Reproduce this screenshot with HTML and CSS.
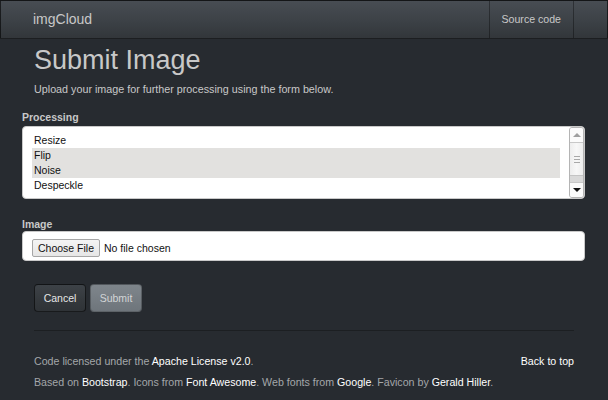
FILE: index.html
```html
<!DOCTYPE html>
<html lang="en">
<head>
<meta charset="utf-8">
<title>imgCloud - Submit Image</title>
<link rel="stylesheet" href="styles.css">
</head>
<body>
<header class="navbar">
  <div class="nav-inner">
    <a class="brand" href="#">imgCloud</a>
    <nav class="nav-links"><a class="nav-link" href="#">Source code</a></nav>
  </div>
</header>
<main class="container">
  <h1 class="title">Submit Image</h1>
  <p class="lead">Upload your image for further processing using the form below.</p>
  <form class="form">
    <div class="group">
      <label class="label">Processing</label>
      <div class="listbox">
        <div class="options">
          <div class="option">Resize</div>
          <div class="option sel">Flip</div>
          <div class="option sel">Noise</div>
          <div class="option">Despeckle</div>
        </div>
        <div class="scrollbar">
          <div class="sb-btn sb-up"><span class="tri-up"></span></div>
          <div class="sb-thumb"><span class="grip"></span><span class="grip"></span><span class="grip"></span></div>
          <div class="sb-track"></div>
          <div class="sb-btn sb-down"><span class="tri-down"></span></div>
        </div>
      </div>
    </div>
    <div class="group group-image">
      <label class="label">Image</label>
      <div class="filebox">
        <button type="button" class="file-btn">Choose File</button>
        <span class="file-name">No file chosen</span>
      </div>
    </div>
  </form>
  <div class="actions">
    <button type="button" class="btn btn-default">Cancel</button>
    <button type="button" class="btn btn-primary">Submit</button>
  </div>
  <hr class="rule">
  <footer class="footer">
    <div class="foot-line">
      <span>Code licensed under the <a href="#">Apache License v2.0</a>.</span>
      <a href="#">Back to top</a>
    </div>
    <div class="foot-line foot-second">
      <span>Based on <a href="#">Bootstrap</a>. Icons from <a href="#">Font Awesome</a>. Web fonts from <a href="#">Google</a>. Favicon by <a href="#">Gerald Hiller</a>.</span>
    </div>
  </footer>
</main>
</body>
</html>
```
FILE: styles.css
```css
html, body {
  margin: 0;
  padding: 0;
}
body {
  background: #272b30;
  color: #c8c8c8;
  font-family: "Liberation Sans", Arial, sans-serif;
  font-size: 10.5px;
  line-height: 15px;
}
a {
  color: #ffffff;
  text-decoration: none;
}

/* navbar */
.navbar {
  height: 39px;
  box-sizing: border-box;
  border: 1px solid rgba(0, 0, 0, 0.6);
  background-image: linear-gradient(#484d53, #3b4045 60%, #32363a);
}
.nav-inner {
  width: 540px;
  height: 100%;
  margin: 0 auto;
  display: flex;
  justify-content: space-between;
  align-items: stretch;
}
.brand {
  display: flex;
  align-items: center;
  font-size: 14px;
  color: #c8c8c8;
  margin-left: -1px;
}
.nav-links {
  display: flex;
}
.nav-link {
  display: flex;
  align-items: center;
  padding: 0 12px 0 12px;
  font-size: 10.6px;
  color: #c8c8c8;
  border-left: 1px solid rgba(0, 0, 0, 0.35);
  border-right: 1px solid rgba(0, 0, 0, 0.35);
}

/* main */
.container {
  width: 540px;
  margin: 0 auto;
}
.title {
  margin: 6px 0 0;
  font-size: 27px;
  line-height: 30px;
  font-weight: normal;
  color: #c8c8c8;
}
.lead {
  margin: 7px 0 0;
  font-size: 10.75px;
}
.form {
  margin: 13px -11px 0 -12px;
}
.label {
  display: block;
  font-weight: bold;
  line-height: 14px;
  margin: 0 0 2px;
  color: #c8c8c8;
}
.group-image {
  margin-top: 18px;
}
.group-image .label {
  margin-bottom: 0;
}

/* listbox */
.listbox {
  display: flex;
  height: 73px;
  box-sizing: border-box;
  background: #ffffff;
  border: 1px solid #c9c9c9;
  border-radius: 4px;
  color: #111;
}
.options {
  flex: 1;
  padding: 6px 9px 5px 9px;
}
.option {
  height: 15px;
  line-height: 15px;
  padding-left: 2px;
}
.option.sel {
  background: #e2e1df;
}
.scrollbar {
  width: 15px;
  box-sizing: border-box;
  display: flex;
  flex-direction: column;
  border: 1px solid #b4b4b4;
  border-radius: 3px;
  background: #f2f2f2;
  overflow: hidden;
}
.sb-btn {
  height: 14px;
  display: flex;
  align-items: center;
  justify-content: center;
  background: #fbfbfb;
}
.sb-up {
  border-bottom: 1px solid #c8c8c8;
}
.sb-down {
  border-top: 1px solid #c8c8c8;
}
.tri-up {
  width: 0;
  height: 0;
  border-left: 4px solid transparent;
  border-right: 4px solid transparent;
  border-bottom: 4px solid #a0a0a0;
}
.tri-down {
  width: 0;
  height: 0;
  border-left: 4px solid transparent;
  border-right: 4px solid transparent;
  border-top: 4px solid #111;
}
.sb-thumb {
  height: 32px;
  display: flex;
  flex-direction: column;
  align-items: center;
  justify-content: center;
  gap: 2px;
  background: linear-gradient(90deg, #ededed, #f7f7f7 50%, #ededed);
  border-bottom: 1px solid #c4c4c4;
}
.grip {
  width: 6px;
  height: 1px;
  background: #a8a8a8;
}
.sb-track {
  flex: 1;
  background: #d9d9d9;
}

/* file input */
.filebox {
  height: 30px;
  box-sizing: border-box;
  display: flex;
  align-items: flex-start;
  padding: 7px 0 0 9px;
  background: #ffffff;
  border: 1px solid #c9c9c9;
  border-radius: 4px;
  color: #111;
}
.file-btn {
  height: 18px;
  box-sizing: border-box;
  padding: 0 5px;
  margin: 0;
  font: inherit;
  font-size: 10.5px;
  line-height: 16px;
  color: #111;
  background: linear-gradient(#f4f4f4, #e6e6e6);
  border: 1px solid #a6a6a6;
  border-radius: 2px;
}
.file-name {
  margin-left: 4px;
  line-height: 18px;
}

/* buttons */
.actions {
  display: flex;
  gap: 4px;
  margin-top: 23px;
}
.btn {
  width: 52px;
  height: 28px;
  box-sizing: border-box;
  margin: 0;
  padding: 0;
  font: inherit;
  font-size: 10.5px;
  border-radius: 4px;
  border: 1px solid rgba(0, 0, 0, 0.6);
  color: #e6e6e6;
}
.btn-default {
  background-image: linear-gradient(#3d4247, #34383c 60%, #2f3337);
}
.btn-primary {
  background-image: linear-gradient(#7e858b, #757c82 60%, #6e757b);
  border-color: rgba(0, 0, 0, 0.25);
  color: #d2d5d7;
}

/* footer */
.rule {
  margin: 18px 0 0;
  border: 0;
  border-top: 1px solid #1c1f22;
  height: 0;
}
.footer {
  margin-top: 23px;
  color: #a4a7aa;
  font-size: 10.65px;
}
.foot-line {
  display: flex;
  justify-content: space-between;
  line-height: 15px;
}
.foot-second {
  margin-top: 6px;
}
```
